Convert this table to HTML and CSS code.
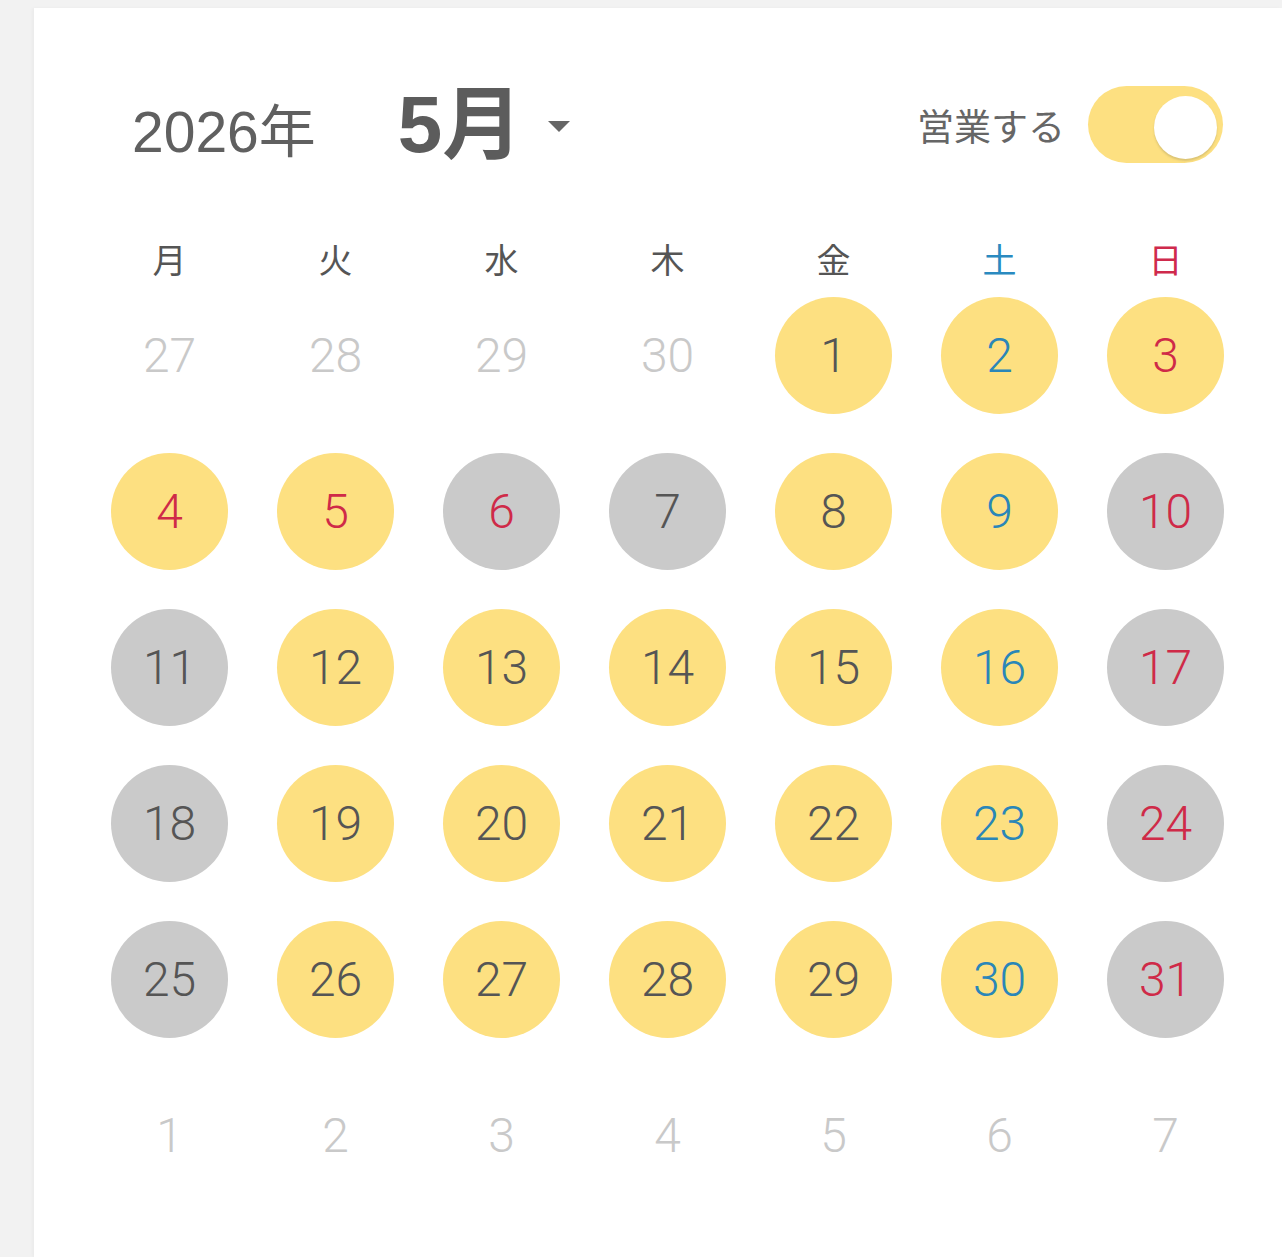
FILE: index.html
```html
<!DOCTYPE html>
<html lang="ja">
<head>
<meta charset="utf-8">
<title>営業カレンダー</title>
<link rel="stylesheet" href="styles.css">
</head>
<body>
<div class="card">
  <div class="header">
    <div class="month-picker">
      <span class="year">2026年</span>
      <span class="month">5月</span>
      <span class="caret"></span>
    </div>
    <div class="open-switch">
      <span class="switch-label">営業する</span>
      <span class="toggle"><span class="knob"></span></span>
    </div>
  </div>
  <div class="weekdays">
    <span class="wd">月</span>
    <span class="wd">火</span>
    <span class="wd">水</span>
    <span class="wd">木</span>
    <span class="wd">金</span>
    <span class="wd sat">土</span>
    <span class="wd sun">日</span>
  </div>
  <div class="days">
    <span class="day out">27</span>
    <span class="day out">28</span>
    <span class="day out">29</span>
    <span class="day out">30</span>
    <span class="day open">1</span>
    <span class="day open sat">2</span>
    <span class="day open sun">3</span>

    <span class="day open sun">4</span>
    <span class="day open sun">5</span>
    <span class="day closed sun">6</span>
    <span class="day closed">7</span>
    <span class="day open">8</span>
    <span class="day open sat">9</span>
    <span class="day closed sun">10</span>

    <span class="day closed">11</span>
    <span class="day open">12</span>
    <span class="day open">13</span>
    <span class="day open">14</span>
    <span class="day open">15</span>
    <span class="day open sat">16</span>
    <span class="day closed sun">17</span>

    <span class="day closed">18</span>
    <span class="day open">19</span>
    <span class="day open">20</span>
    <span class="day open">21</span>
    <span class="day open">22</span>
    <span class="day open sat">23</span>
    <span class="day closed sun">24</span>

    <span class="day closed">25</span>
    <span class="day open">26</span>
    <span class="day open">27</span>
    <span class="day open">28</span>
    <span class="day open">29</span>
    <span class="day open sat">30</span>
    <span class="day closed sun">31</span>

    <span class="day out">1</span>
    <span class="day out">2</span>
    <span class="day out">3</span>
    <span class="day out">4</span>
    <span class="day out">5</span>
    <span class="day out">6</span>
    <span class="day out">7</span>
  </div>
</div>
</body>
</html>
```

FILE: styles.css
```css
html, body {
  margin: 0;
  padding: 0;
}

body {
  background: #f2f2f2;
  font-family: "Roboto", "Liberation Sans", "Noto Sans CJK JP", sans-serif;
  color: #555555;
  overflow: hidden;
}

.card {
  margin: 8px 0 0 34px;
  background: #ffffff;
  min-height: 1249px;
  padding: 78px 59px 0 77px;
  box-sizing: border-box;
  box-shadow: -2px 0 3px rgba(0, 0, 0, 0.03);
}

.header {
  display: flex;
  align-items: center;
  justify-content: space-between;
  height: 77px;
}

.month-picker {
  display: flex;
  align-items: baseline;
  padding-left: 21px;
  line-height: 1;
}

.year {
  font-size: 57px;
  line-height: 1;
  color: #606060;
  font-family: "Liberation Sans", "Noto Sans CJK JP", sans-serif;
}

.month {
  margin-left: 82px;
  font-size: 80px;
  line-height: 1;
  font-weight: 700;
  color: #5c5c5c;
  font-family: "Liberation Sans", "Noto Sans CJK JP", sans-serif;
}

.caret {
  margin-left: 26px;
  width: 0;
  height: 0;
  border-left: 11px solid transparent;
  border-right: 11px solid transparent;
  border-top: 11px solid #666666;
  align-self: center;
  position: relative;
  top: 2px;
}

.open-switch {
  display: flex;
  align-items: center;
  gap: 23px;
}

.switch-label {
  font-family: "Noto Sans CJK JP", sans-serif;
  font-size: 37px;
  color: #666666;
}

.toggle {
  width: 135px;
  height: 77px;
  border-radius: 39px;
  background: #fde081;
  display: flex;
  align-items: center;
  justify-content: flex-end;
  padding-right: 6px;
  box-sizing: border-box;
}

.knob {
  width: 63px;
  height: 63px;
  border-radius: 50%;
  background: #ffffff;
  box-shadow: 0 2px 2px rgba(120, 110, 80, 0.25);
  position: relative;
  top: 3px;
}

.weekdays {
  margin-top: 76px;
  display: grid;
  grid-template-columns: repeat(7, 117px);
  column-gap: 49px;
}

.wd {
  text-align: center;
  font-family: "Noto Sans CJK JP", sans-serif;
  font-size: 34px;
  line-height: 40px;
  color: #555555;
}

.wd.sat { color: #2a8ac0; }
.wd.sun { color: #cf2a4c; }

.days {
  margin-top: 18px;
  display: grid;
  grid-template-columns: repeat(7, 117px);
  grid-auto-rows: 117px;
  column-gap: 49px;
  row-gap: 39px;
}

.day {
  display: flex;
  align-items: center;
  justify-content: center;
  border-radius: 50%;
  font-size: 48px;
  font-weight: 300;
  color: #555555;
}

.day.open { background: #fde081; }
.day.closed { background: #cacaca; }
.day.out { color: #c9c9c9; }
.day.sat { color: #2a86b8; }
.day.sun { color: #cf2a48; }
```
